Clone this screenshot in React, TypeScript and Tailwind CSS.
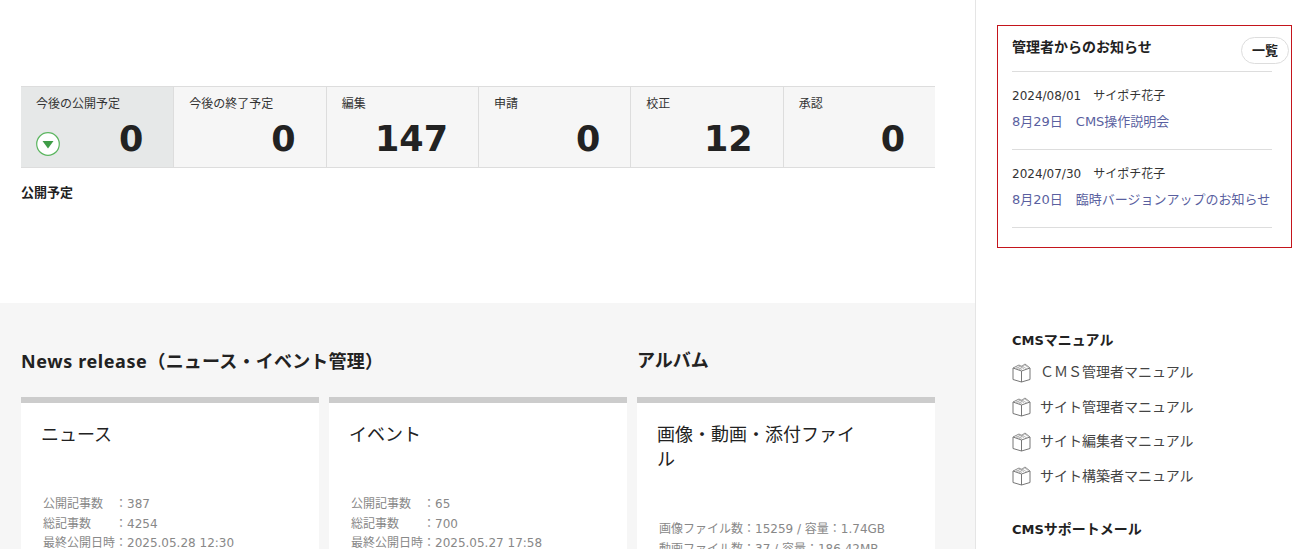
const font = "font-['DejaVu_Sans','Noto_Sans_CJK_JP',sans-serif]"

const stats = [
  { label: '今後の公開予定', value: '0', active: true },
  { label: '今後の終了予定', value: '0' },
  { label: '編集', value: '147' },
  { label: '申請', value: '0' },
  { label: '校正', value: '12' },
  { label: '承認', value: '0' },
]

const cards = [
  { title: 'ニュース', lines: [['公開記事数', '：387'], ['総記事数', '：4254'], ['最終公開日時', '：2025.05.28 12:30']] },
  { title: 'イベント', lines: [['公開記事数', '：65'], ['総記事数', '：700'], ['最終公開日時', '：2025.05.27 17:58']] },
]

const manuals = ['ＣＭＳ管理者マニュアル', 'サイト管理者マニュアル', 'サイト編集者マニュアル', 'サイト構築者マニュアル']

function BookIcon() {
  return (
    <svg width="19" height="20" viewBox="0 0 19 20" fill="none" stroke="#777" strokeWidth="1" className="shrink-0">
      <path d="M1 5 L9.5 8 V19 L1 16.5 Z" />
      <path d="M9.5 8 L18 5 V16.5 L9.5 19" />
      <path d="M1 5 L7 2 L9.5 3.5 L13 1 L18 5" stroke="#888" />
      <path d="M3.5 3.8 L10 6.5 M6 2.6 L12 5.6 M9 2.6 L15 6 M12 1.6 L16.5 4.5 M4 6 L9 2.8 M7 7 L12.5 2" stroke="#aaa" strokeWidth="0.8" />
    </svg>
  )
}

function DownIcon() {
  return (
    <svg width="24" height="24" viewBox="0 0 24 24" className="shrink-0">
      <circle cx="12" cy="12" r="11.3" fill="#fff" stroke="#5cb660" strokeWidth="1.2" />
      <path d="M6.5 9 H17.5 L12 16.5 Z" fill="#3f9c47" />
    </svg>
  )
}

function Card({ title, lines }: { title: string; lines: string[][] }) {
  return (
    <div className="w-[298px] h-[300px] bg-white border-t-[6px] border-[#cccccc] pl-5 pt-[19px]">
      <h3 className="text-[18px] leading-[25px] text-[#222] h-[73px]">{title}</h3>
      <div className="pl-[2px] text-[12px] leading-[19.5px] text-[#888]">
        {lines.map(l => (
          <div key={l[0]} className="flex">
            <span className="w-[72px]">{l[0]}</span>
            <span>{l[1]}</span>
          </div>
        ))}
      </div>
    </div>
  )
}

export default function App() {
  return (
    <div className={`${font} w-[1305px] h-[549px] overflow-hidden flex bg-white text-[#222]`}>
      <main className="w-[976px] shrink-0 border-r border-[#e5e5e5]">
        <section className="h-[303px] pt-[86px] pl-[21px] pr-[40px]">
          <div className="grid grid-cols-6 h-[82px] border-y border-[#dddddd]">
            {stats.map(s => (
              <div
                key={s.label}
                className={`relative border-l border-[#dddddd] first:border-l-0 pl-[15px] pt-[9px] ${s.active ? 'bg-[#e6e8e8]' : 'bg-[#f6f6f6]'}`}
              >
                <div className="text-[12px] leading-[16px] text-[#333]">{s.label}</div>
                {s.active && <div className="absolute left-[15px] top-[45px]"><DownIcon /></div>}
                <div className="absolute right-[30px] top-[30px] text-[35px] leading-[44px] font-bold text-[#222]">{s.value}</div>
              </div>
            ))}
          </div>
          <div className="mt-[17px] text-[13px] leading-[16px] font-bold">公開予定</div>
        </section>
        <section className="bg-[#f6f6f6] h-[246px] pl-[21px] pt-[45px]">
          <div className="flex gap-[10px]">
            <div>
              <h2 className="font-['Noto_Sans','Noto_Sans_CJK_JP',sans-serif] text-[18px] leading-[26px] font-bold mb-[23px] tracking-[0.2px]"><span className="tracking-[0.6px]">News release</span>（ニュース・イベント管理）</h2>
              <div className="flex gap-[10px]">
                {cards.map(c => <Card key={c.title} {...c} />)}
              </div>
            </div>
            <div>
              <h2 className="text-[18px] leading-[26px] font-bold mb-[23px]">アルバム</h2>
              <div className="w-[298px] h-[300px] bg-white border-t-[6px] border-[#cccccc] pl-5 pt-[19px]">
                <h3 className="text-[18px] leading-[25px] text-[#222] w-[205px] h-[98px]">画像・動画・添付ファイル</h3>
                <div className="pl-[2px] text-[12px] leading-[19.5px] text-[#888]">
                  <div>画像ファイル数：15259 / 容量：1.74GB</div>
                  <div>動画ファイル数：37 / 容量：186.42MB</div>
                </div>
              </div>
            </div>
          </div>
        </section>
      </main>
      <aside className="flex-1 pl-[21px]">
        <div className="mt-[25px] w-[295px] h-[223px] border border-[#c4151c] pl-[14px] pr-[19px] pt-[9px]">
          <div className="relative h-[37px] border-b border-[#dddddd]">
            <h2 className="text-[14px] leading-[24px] font-bold">管理者からのお知らせ</h2>
            <button className="absolute right-[-17px] top-[2px] w-[48px] h-[27px] rounded-full border border-[#dddddd] bg-white text-[13px] font-bold">一覧</button>
          </div>
          {[['2024/08/01', '8月29日　CMS操作説明会'], ['2024/07/30', '8月20日　臨時バージョンアップのお知らせ']].map(n => (
            <div key={n[0]} className="h-[78px] border-b border-[#dddddd] pt-[14px]">
              <div className="text-[12px] leading-[20px] text-[#333]">{n[0]}　サイポチ花子</div>
              <div className="mt-[6px] text-[13px] leading-[20px] text-[#5a5fa0]">{n[1]}</div>
            </div>
          ))}
        </div>
        <div className="mt-[82px] pl-[15px]">
          <h2 className="text-[14px] leading-[20px] font-bold"><span className="text-[13px]">CMS</span>マニュアル</h2>
          <ul className="mt-[4.5px]">
            {manuals.map(m => (
              <li key={m} className="flex items-center gap-[9px] h-[34.5px] text-[14px] text-[#444]">
                <BookIcon />
                <span>{m}</span>
              </li>
            ))}
          </ul>
          <h2 className="mt-[25px] text-[14px] leading-[20px] font-bold"><span className="text-[13px]">CMS</span>サポートメール</h2>
        </div>
      </aside>
    </div>
  )
}
